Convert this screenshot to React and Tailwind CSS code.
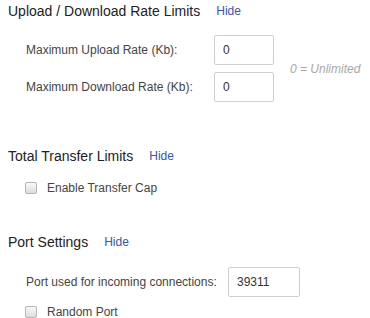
import React from "react";

const font = { fontFamily: '"Liberation Sans", Arial, sans-serif' };

function Header({ title, mt }) {
  return (
    <div className={`flex items-center h-[18px] pl-2 ${mt}`}>
      <span className="text-[14px] leading-[18px] text-[#222]">{title}</span>
      <span className="ml-4 text-[12px] leading-[18px] text-[#3557a8]">Hide</span>
    </div>
  );
}

function Box() {
  return (
    <span className="inline-block w-[12px] h-[12px] rounded-[2px] border border-[#b5b5b5] bg-gradient-to-b from-[#fafafa] to-[#dcdcdc]" />
  );
}

function Input({ value, w }) {
  return (
    <div className={`${w} h-[30px] border border-[#cfcfcf] rounded-[2px] bg-white flex items-center pl-[8px] text-[12px] text-[#333]`}>
      {value}
    </div>
  );
}

export default function App() {
  return (
    <div className="w-[370px] h-[318px] bg-white overflow-hidden" style={font}>
      <div className="pt-[2px]">
        <Header title="Upload / Download Rate Limits" mt="mt-0" />
        <div className="flex items-center mt-[15px] pl-[26px]">
          <div className="flex flex-col gap-[7px]">
            <div className="flex items-center">
              <span className="w-[188px] text-[12px] text-[#444]">Maximum Upload Rate (Kb):</span>
              <Input value="0" w="w-[60px]" />
            </div>
            <div className="flex items-center">
              <span className="w-[188px] text-[12px] text-[#444]">Maximum Download Rate (Kb):</span>
              <Input value="0" w="w-[60px]" />
            </div>
          </div>
          <span className="ml-[16px] text-[12px] italic text-[#a8a8a8]">0 = Unlimited</span>
        </div>

        <Header title="Total Transfer Limits" mt="mt-[45px]" />
        <div className="flex items-center mt-[16px] pl-[25px] h-[14px]">
          <Box />
          <span className="ml-[10px] text-[12px] text-[#444]">Enable Transfer Cap</span>
        </div>

        <Header title="Port Settings" mt="mt-[38px]" />
        <div className="flex items-center mt-[16px] pl-[26px]">
          <span className="w-[202px] text-[12px] text-[#444]">Port used for incoming connections:</span>
          <Input value="39311" w="w-[72px]" />
        </div>
        <div className="flex items-center mt-[8px] pl-[25px] h-[14px]">
          <Box />
          <span className="ml-[10px] text-[12px] text-[#444]">Random Port</span>
        </div>
      </div>
    </div>
  );
}
